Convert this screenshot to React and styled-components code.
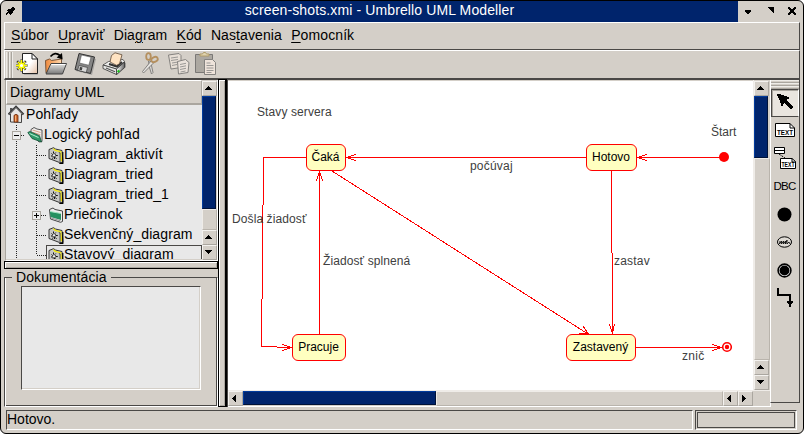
import React from "react";
import styled, { createGlobalStyle } from "styled-components";

const c = {
  face: "#d4cfc8",
  light: "#ffffff",
  mid: "#aaa69f",
  dark: "#4a4846",
  navy: "#00246c",
  view: "#e8e8e8",
  red: "#ff0000",
};

const Global = createGlobalStyle`
  * { box-sizing: border-box; }
  body { margin: 0; background: #fff; overflow: hidden; }
  svg { display: block; flex: none; }
`;

const Window = styled.div`
  width: 804px;
  height: 434px;
  border: 1px solid #000;
  border-radius: 6px;
  overflow: hidden;
  background: ${c.face};
  font: 14px/20px "Liberation Sans", Arial, sans-serif;
  color: #000;
  display: flex;
  flex-direction: column;
`;
const TitleBar = styled.header`
  height: 21px;
  flex: none;
  display: flex;
`;
const Caption = styled.div`
  width: 716px;
  background: ${c.navy};
  color: #fff;
  text-align: center;
  letter-spacing: 0.12px;
  line-height: 19px;
  padding-right: 1px;
`;
const Frame = styled.div`
  margin: 0 3px;
  width: 796px;
  display: flex;
  flex-direction: column;
`;
const MenuBar = styled.nav`
  height: 28px;
  border: 1px solid ${c.light};
  border-right-color: ${c.dark};
  border-bottom-color: ${c.dark};
  display: flex;
  gap: 9.2px;
  padding-left: 6px;
  line-height: 25px;
`;
const MenuItem = styled.span`
  letter-spacing: 0.1px;
  white-space: nowrap;
  u { text-underline-offset: 1.5px; text-decoration-thickness: 1px; }
`;
const ToolBar = styled.div`
  height: 30px;
  border: 1px solid ${c.light};
  border-right-color: ${c.dark};
  border-bottom: 2px solid ${c.dark};
  display: flex;
  padding: 1px 0 0 1px;
`;
const Grip = styled.div`
  width: 8px;
  height: 26px;
  margin-right: 2px;
  background: repeating-linear-gradient(90deg, #eeece8 0 1px, ${c.face} 1px 2px, ${c.mid} 2px 3px);
`;
const ToolButton = styled.div`
  width: ${(p) => p.$w}px;
  opacity: ${(p) => (p.$off ? 0.62 : 1)};
`;
const Body = styled.main`
  height: 327px;
  display: flex;
`;
const Side = styled.aside`
  width: 214px;
  display: flex;
  flex-direction: column;
`;
const TreePanel = styled.section`
  height: 181px;
  border-left: 1px solid ${c.mid};
  border-bottom: 1px solid ${c.light};
  border-right: 1px solid ${c.light};
  margin-left: 1px;
  display: flex;
`;
const TreeView = styled.div`
  width: 196px;
  height: 179px;
  background: ${c.view};
  overflow: hidden;
`;
const TreeHeader = styled.div`
  height: 25px;
  background: ${c.face};
  border: 1px solid ${c.light};
  border-right: 1px solid ${c.mid};
  border-bottom: 2px solid ${c.mid};
  padding-left: 3px;
  line-height: 22px;
  letter-spacing: 0.08px;
`;
const TreeRow = styled.div`
  height: 20px;
  display: flex;
  white-space: nowrap;
`;
const TreeItem = styled.div`
  display: flex;
  flex: ${(p) => (p.$focus ? "1" : "none")};
  margin-left: ${(p) => (p.$focus ? -2 : 0)}px;
  border: solid ${c.dark};
  border-width: ${(p) => (p.$focus ? "1px" : "0")};
  padding-left: ${(p) => (p.$focus ? 1 : 0)}px;
  line-height: ${(p) => (p.$focus ? 16 : 18)}px;
  letter-spacing: 0.1px;
`;
const ScrollColumn = styled.div`
  width: ${(p) => p.$w}px;
  display: flex;
  flex-direction: column;
  padding-top: 1px;
  border-left: ${(p) => (p.$edge ? "1px solid #efece8" : "0")};
  background: ${c.face};
`;
const ScrollRow = styled.div`
  height: 16px;
  display: flex;
  border-top: 1px solid #efece8;
`;
const ScrollButton = styled.div`
  width: 15px;
  height: 15px;
  flex: none;
  border: 1px solid #f4f2ef;
  border-right-color: ${c.mid};
  border-bottom-color: ${c.mid};
  background: ${c.face};
  display: grid;
  align-content: center;
  padding: 0 0 1px ${(p) => (p.$side ? 3 : 2)}px;
`;
const Thumb = styled.div`
  flex: none;
  width: ${(p) => p.$w}px;
  height: ${(p) => p.$h}px;
  background: ${c.navy};
  border: 1px solid #003a9c;
  border-right-color: #001238;
  border-bottom-color: #001238;
`;
const Groove = styled.div`
  flex: 1;
  border: 1px solid #efece8;
  border-right-color: #b9b4ac;
  border-bottom-color: #b9b4ac;
`;
const HSplitter = styled.div`
  height: 8px;
  border: 1px solid #000;
  box-shadow: inset 1px 1px #fff, inset -1px -1px ${c.mid};
`;
const VSplitter = styled.div`
  width: 9px;
  height: 328px;
  margin-top: -1px;
  border: 1px solid #000;
  border-right-width: 2px;
  box-shadow: inset 1px 1px #fff, inset -1px -1px ${c.mid};
`;
const Group = styled.fieldset`
  margin: 0;
  padding: 0 0 0 16px;
  height: 138px;
  min-width: 0;
  border: 1px solid ${c.dark};
  border-right-color: #fff;
  border-bottom-color: #fff;
  box-shadow: inset 1px 0 #fff, inset -1px -1px ${c.dark};
`;
const Legend = styled.legend`
  margin-left: -9px;
  padding: 0 4px;
  height: 17px;
  line-height: 17px;
  letter-spacing: 0.1px;
`;
const DocText = styled.div`
  width: 180px;
  height: 104px;
  background: ${c.view};
  border: 1px solid ${c.dark};
  border-right-color: #fff;
  border-bottom-color: #fff;
  box-shadow: inset -1px -1px ${c.face};
`;
const Work = styled.section`
  width: 543px;
  display: grid;
  grid-template: 310px 17px / 526px 17px;
  border-left: 1px solid ${c.dark};
`;
const Canvas = styled.div`
  width: 525px;
  border-top: 1px solid ${c.face};
  background: #fff;
  position: relative;
  overflow: hidden;
  font-size: 12px;
  line-height: 14px;
`;
const WorkV = styled.div`
  display: flex;
  margin-left: -1px;
  border-right: 1px solid #fff;
`;
const WorkH = styled.div`
  grid-column: 1 / 3;
  border-bottom: 1px solid #fff;
  border-right: 1px solid #fff;
`;
const StateNode = styled.div`
  position: absolute;
  left: ${(p) => p.$x - 228}px;
  top: ${(p) => p.$y - 81}px;
  width: ${(p) => p.$w}px;
  height: 27px;
  line-height: 25px;
  text-align: center;
  border: 1px solid ${c.red};
  border-radius: 6px;
  background: #ffffc0;
  padding-right: 1px;
`;
const EdgeLabel = styled.div`
  position: absolute;
  left: ${(p) => p.$x - 228}px;
  top: ${(p) => p.$base - 81 - 11}px;
  letter-spacing: ${(p) => p.$ls || 0}px;
  color: #404040;
  white-space: nowrap;
`;
const Palette = styled.aside`
  width: 30px;
  height: 323px;
  border-right: 1px solid ${c.dark};
  border-bottom: 1px solid ${c.dark};
  border-left: 1px solid #fff;
`;
const PaletteGrip = styled.div`
  height: 9px;
  background: repeating-linear-gradient(#eeece8 0 1px, ${c.face} 1px 2px, ${c.mid} 2px 3px);
`;
const PaletteButton = styled.div`
  height: 28px;
  display: grid;
  place-items: center;
  padding: 0 1px 2px 0;
  font-size: 11.5px;
  letter-spacing: -0.7px;
  border: 1px solid ${(p) => (p.$on ? c.dark : "transparent")};
  border-right-color: ${(p) => (p.$on ? "#fff" : "transparent")};
  box-shadow: ${(p) => (p.$on ? `inset 1px 1px ${c.mid}` : "none")};
  background: ${(p) => (p.$on ? "#e9e5df" : "transparent")};
`;
const StatusBar = styled.footer`
  height: 20px;
  margin: 3px 3px 0 2px;
  display: flex;
  gap: 2px;
`;
const StatusCell = styled.div`
  width: ${(p) => p.$w}px;
  border: 1px solid ${c.dark};
  border-right-color: #fff;
  border-bottom-color: #fff;
  line-height: 17px;
  padding: ${(p) => (p.$inset ? "1px" : "0")};
`;
const Progress = styled.div`
  height: 16px;
  border: 1px solid ${c.dark};
`;

const ARROWS = {
  up: "M3 0h1v1h1v1h1v1h1v1H0V3h1V2h1V1h1z",
  down: "M0 0h7v1H6v1H5v1H4v1H3V3H2V2H1V1H0z",
  left: "M3 0h1v7H3V6H2V5H1V4H0V3h1V2h1V1h1z",
  right: "M0 0h1v1h1v1h1v1h1v1H3v1H2v1H1v1H0z",
};
const Arrow = ({ dir }) => {
  const side = dir === "left" || dir === "right";
  return (
    <ScrollButton $side={side}>
      <svg width={side ? 4 : 7} height={side ? 7 : 4} shapeRendering="crispEdges">
        <path d={ARROWS[dir]} />
      </svg>
    </ScrollButton>
  );
};

const Pin = () => (
  <svg width="21" height="21" shapeRendering="crispEdges">
    <path d="M11 6h2v1h1v2h-1v1h-1v2h-1v1h-1v1H9v-1H8v-1H7v1H6v1H5v-2h1v-1h1v-1H6V9h1V8h3V7h1z" />
  </svg>
);
const WindowButtons = () => (
  <svg width="65" height="21" shapeRendering="crispEdges">
    <path d="M7 9h6v2h-1v1h-1v1H9v-1H8v-1H7z" />
    <path d="M30 6h6v6h-1v-1h-1v-1h-1V9h-1V8h-1V7h-1z" />
    <path d="M50 6h2v1h1v1h2V7h1V6h2v2h-1v1h-1v2h1v1h1v2h-2v-1h-1v-1h-2v1h-1v1h-2v-2h1v-1h1V9h-1V8h-1z" />
  </svg>
);

const Defs = () => (
  <svg width="0" height="0">
    <defs>
      <linearGradient id="paper" x2="1" y2="1"><stop stopColor="#fff" /><stop offset=".5" stopColor="#fff" /><stop offset="1" stopColor="#e3bfa4" /></linearGradient>
      <linearGradient id="steel" x2="0" y2="1"><stop stopColor="#e6e6e4" /><stop offset="1" stopColor="#777" /></linearGradient>
      <linearGradient id="orange" x2="1" y2="0"><stop stopColor="#f08a3c" /><stop offset="1" stopColor="#ffd9ae" /></linearGradient>
      <linearGradient id="tray" x2="1" y2="0"><stop stopColor="#fff" /><stop offset="1" stopColor="#666" /></linearGradient>
    </defs>
  </svg>
);
const NewIcon = () => (
  <svg width="24" height="24">
    <path d="M8 2.5h9l5 5V23H8z" fill="#999" opacity=".6" />
    <path d="M6.500 1.500h9.500l5.500 5.500v14.500h-15z" fill="url(#paper)" stroke="#222" />
    <path d="M16 1.500V7h5.500z" fill="#fff" stroke="#222" />
    <path d="M5.500 7.500v12M-.5 13.500h12M1.200 9.200l8.600 8.600M9.800 9.200L1.200 17.800" stroke="#333" strokeWidth="2.400" strokeDasharray="1.200 .6" />
    <path d="M5.500 8v11M0 13.500h11M2 10l7 7M9 10l-7 7" stroke="#ff0" strokeWidth="1.600" />
    <circle cx="5.500" cy="13.500" r="2.200" fill="#fff" stroke="#ff0" strokeWidth="1.200" />
  </svg>
);
const OpenIcon = () => (
  <svg width="25" height="24">
    <path d="M2 21L1.500 8.500l4-1.500 2 1.500 10-1.500v6z" fill="url(#orange)" stroke="#6e4b30" strokeWidth=".9" />
    <path d="M7 11.500h15.500l-4 10.500H2z" fill="url(#steel)" stroke="#444" />
    <path d="M7.500 12.500h14" stroke="#fff" />
    <path d="M6.500 4.500Q11-.8 16 3.500" fill="none" stroke="#000" strokeWidth="1.700" />
    <path d="M18 1l.6 6.500-6-2z" />
  </svg>
);
const SaveIcon = () => (
  <svg width="24" height="24">
    <path d="M6 3l16 4-4 16L2 19z" fill="#888" opacity=".6" />
    <path d="M5 1.500L20.500 5l-4 16.500L1 17.500z" fill="#858585" stroke="#333" />
    <path d="M7.500 3l9.500 2.200-2.200 8-9.300-2.200z" fill="#fff" stroke="#444" strokeWidth=".5" />
    <path d="M5 13.500l8.500 2-1.300 5-8.500-2.300z" fill="#d8d8d8" stroke="#333" strokeWidth=".6" />
    <path d="M6 14.800l2.500.6-.7 2.900-2.500-.6z" fill="#444" />
  </svg>
);
const PrintIcon = () => (
  <svg width="26" height="24">
    <path d="M3 16l12 7 9-8v-4l-2-1z" fill="#777" opacity=".6" />
    <path d="M1 13L6.500 9.500 21 7.500l1.500 2L14.500 17z" fill="#eeeeec" stroke="#444" strokeWidth=".8" />
    <path d="M7 12l8 2.500 5-4.500" fill="none" stroke="#333" strokeWidth="2.200" />
    <path d="M8 10L9.500 3.500 13 .8l7 2-2.500 9-3 1.500z" fill="#ffe3c2" stroke="#5e4a38" strokeWidth=".8" />
    <path d="M1 13l13.500 4v5.500L1 16.500z" fill="#e6e6e4" stroke="#333" strokeWidth=".8" />
    <path d="M14.500 17l8-7v5.500l-8 7z" fill="url(#tray)" stroke="#333" strokeWidth=".8" />
    <path d="M4 16l9 3.800" stroke="#555" strokeWidth="1.200" />
    <path d="M15.500 19.800l2-1.300" stroke="#14c714" strokeWidth="2" />
  </svg>
);
const CutIcon = () => (
  <svg width="19" height="24">
    <path d="M7.500 9L9.500 9l2.500 11.500-1.500 1.500-2.200-7z" fill="#ddd" stroke="#444" strokeWidth=".9" />
    <path d="M1.500 19.500L10 9l3 1.500L2.500 21z" fill="#eee" stroke="#444" strokeWidth=".9" />
    <ellipse cx="13.500" cy="7.500" rx="3.400" ry="2.400" fill="none" stroke="#a36b20" strokeWidth="1.800" transform="rotate(-25 13.500 7.500)" />
    <ellipse cx="7.500" cy="4.500" rx="2.300" ry="3.400" fill="none" stroke="#a36b20" strokeWidth="1.800" />
  </svg>
);
const CopyIcon = () => (
  <svg width="24" height="24">
    <path d="M1.500 3L12 1.500l2 2v12L4 17z" fill="#f4e9e0" stroke="#555" />
    <path d="M4 6l7-1M4 8.500l7-1M5 11l6-1M5 13.500l5-1" stroke="#777" />
    <path d="M10.500 9.500l8-2L22 10.500l-1 10-9.500 1.500z" fill="#f8efe8" stroke="#555" />
    <path d="M13 12.500l6-1.200M13 15l6-1.200M13 17.500l6-1.200M13.500 20l5-1" stroke="#777" />
  </svg>
);
const PasteIcon = () => (
  <svg width="23" height="24">
    <path d="M1.500 2.500h17v18h-17z" fill="#95918a" stroke="#444" />
    <path d="M6 4V2h2.500L9.500.5h2L12.500 2H15v2z" fill="#e8d7a0" stroke="#9a7d30" />
    <path d="M10.500 7.500h8l3 3v12h-11z" fill="#fff0e6" stroke="#555" />
    <path d="M12.500 11h4M12.500 13.500h7M12.500 16h7M12.500 18.500h7M12.500 20.500h5" stroke="#777" />
  </svg>
);

const HomeIcon = () => (
  <svg width="18" height="20">
    <path d="M2.500 8.500v8.500l11 .5V8.500L8 2z" fill="#e8e6e4" stroke="#444" />
    <path d="M2 3h2.500v4H2z" fill="#555" />
    <path d="M.5 9.500L8 1.800 15.500 9.500" fill="none" stroke="#3a3a3a" strokeWidth="2.200" />
    <path d="M1.500 9.200L8 2.700 14.500 9.200" fill="none" stroke="#bbb" strokeWidth=".7" />
    <path d="M6 17V10.500q2-2.500 4 0V17z" fill="#c85d20" stroke="#6b2c0c" strokeWidth=".8" />
    <path d="M7.700 16.500v-6" stroke="#ffc38c" />
  </svg>
);
const FolderIcon = ({ open }) => (
  <svg width={open ? 17 : 16} height="20">
    {open ? (
      <>
        <path d="M4 8V4.500l3-2 3 1.500 5 1v11.500L12 17z" fill="#eee" stroke="#555" />
        <path d="M5.500 5l8 2.500M5.500 7.200l8 2.600" stroke="#d77d55" strokeWidth=".7" />
        <path d="M.8 7.500l2-1 9.700 4.200 2 6.300L5 13.500z" fill="#319968" stroke="#125036" strokeWidth=".8" />
        <path d="M2.500 8.500l9 4" stroke="#b3f0d2" />
      </>
    ) : (
      <>
        <path d="M2.500 14L1.500 4.500l3.500-1.500 2 1.500 7.500 1.500v10.500l-2 .8z" fill="#eee" stroke="#444" />
        <path d="M1.800 6.500l11.200 2v6.500l-10.500-3z" fill="#259060" />
        <path d="M2 6.500l11 2" stroke="#9ee0be" />
        <path d="M2.500 12.800l10 3" stroke="#999" />
      </>
    )}
  </svg>
);
const DiagramIcon = () => (
  <svg width="16" height="20">
    <path d="M1 4.500L5.500 2.700 7.500 4 14 5.500 15 17.500 11.500 17.500 1 13.500z" fill="#c8c8c6" stroke="#222" strokeWidth=".9" />
    <path d="M4.500 3.500l2 .2 1.500 1.300 5.500 1.200v1.300L7 6z" fill="#f6ea00" />
    <path d="M12.300 7.500l1.200.3.700 8.700-1.500-.2z" fill="#e8d900" />
    <path d="M10.800 7.500l1.200.4v9" fill="none" stroke="#333" strokeWidth=".8" />
    <path d="M14.800 7v11.500h-3.500" fill="none" stroke="#000" strokeWidth="1.200" />
    <path d="M5.500 6.500v1.500M3.500 8.500l1 1M7.800 7.500l-.8 1M3 11h1.500M5 12.500l-.5 1.200M8 10.500h1.800M7.500 12.500l1 1.300M6.500 11.500v2.500" stroke="#111" />
    <circle cx="6" cy="10.300" r="1.700" fill="#eee" stroke="#222" strokeWidth=".8" />
  </svg>
);

const dots = { stroke: "#222", strokeDasharray: "1 1", fill: "none" };
const Guides = ({ level, last, expander }) => {
  if (!level) return <svg width="2" height="20" />;
  const w = level === 1 ? 21 : 42;
  const x = level === 1 ? 10.5 : 30.5;
  return (
    <svg width={w} height="20" shapeRendering="crispEdges">
      {level === 2 && <path d="M10.500 0v20" {...dots} />}
      <path d={`M${x} 0v${last ? 10 : 20}M${x} 10.500h${w - x - 2}`} {...dots} />
      {expander && (
        <>
          <rect x={x - 4} y="6.500" width="8" height="8" fill="#eee" stroke="#aaa69f" />
          <path d={`M${x - 2.5} 10.500h5${expander === "+" ? `M${x} 8v5` : ""}`} stroke="#000" />
        </>
      )}
    </svg>
  );
};

const TREE = [
  { text: "Pohľady", level: 0, icon: <HomeIcon /> },
  { text: "Logický pohľad", level: 1, icon: <FolderIcon open />, expander: "-" },
  { text: "Diagram_aktivít", level: 2, icon: <DiagramIcon /> },
  { text: "Diagram_tried", level: 2, icon: <DiagramIcon /> },
  { text: "Diagram_tried_1", level: 2, icon: <DiagramIcon /> },
  { text: "Priečinok", level: 2, icon: <FolderIcon />, expander: "+" },
  { text: "Sekvenčný_diagram", level: 2, icon: <DiagramIcon /> },
  { text: "Stavový_diagram", level: 2, icon: <DiagramIcon />, focus: true, last: true },
];

const MENU = [
  ["", "S", "úbor"],
  ["", "U", "praviť"],
  ["Dia", "g", "ram"],
  ["", "K", "ód"],
  ["Nas", "t", "avenia"],
  ["", "P", "omocník"],
];

const TOOLS = [
  [NewIcon, 28],
  [OpenIcon, 30],
  [SaveIcon, 28],
  [PrintIcon, 39],
  [CutIcon, 26, true],
  [CopyIcon, 27, true],
  [PasteIcon, 24, true],
];

const Edges = () => (
  <svg width="525" height="309" viewBox="228 81 525 309" fill="none" stroke={c.red} shapeRendering="crispEdges">
    <path d="M306 157.500H263.500V205M262.500 205V299M261.500 299V346.500H277M277 347.500H292M282 344.500L292 347.500L282 350.500" />
    <path d="M319.500 334V171M316.500 181L319.500 171L322.500 181" />
    <path d="M332 171L588 334M579 333L588.500 334L583 326" />
    <path d="M586 157.500H346M356 154.500L346 157.500L356 160.500" />
    <path d="M611.500 171V253M612.500 253V334M609.500 324L612.500 334L614.500 324" />
    <path d="M720 157.500H637M647 154.500L637 157.500L647 160.500" />
    <path d="M636 347.500H722M712 344.500L722 347.500L712 350.500" />
    <g shapeRendering="auto">
      <circle cx="724" cy="157" r="5" fill={c.red} stroke="none" />
      <circle cx="727" cy="347" r="4.300" fill="#fff" strokeWidth="1.600" />
      <circle cx="727" cy="347" r="2.200" fill={c.red} stroke="none" />
    </g>
  </svg>
);

const PointerIcon = () => (
  <svg width="18" height="18" shapeRendering="crispEdges">
    <path d="M1 1h4v1h3v1h3v1h2v2h-2v2h1v1h1v1h1v1h1v1h1v1h1v2h-1v1h-2v-1h-1v-1h-1v-1h-1v-1h-1v-1H9v-1H8v1H7v2H5V10H4V7H3V5H2V3H1z" />
  </svg>
);
const NoteShape = ({ small }) => (
  <svg width={small ? 16 : 20} height={small ? 11 : 14}>
    <path d={small ? "M.5.500h11.500l3.500 3v7H.500z" : "M.5.500h14.500l4.500 4.500v8.500H.500z"} fill="#fff" stroke="#000" />
    <path d={small ? "M12 .5v3.500h3.500" : "M15 .5v4.500h4.500"} fill="none" stroke="#000" />
    <text
      x={small ? 1.5 : 2}
      y={small ? 9.2 : 12}
      textLength={small ? 13 : 16}
      lengthAdjust="spacingAndGlyphs"
      fontSize={small ? 7 : 8}
      fontWeight="bold"
      letterSpacing="0"
    >
      TEXT
    </text>
  </svg>
);
const AnchorIcon = () => (
  <svg width="22" height="22">
    <path d="M.5.500h10v6H.500zM.5 3.500h10" fill="#fff" stroke="#000" />
    <path d="M5 7l6 4" stroke="#000" strokeDasharray="2 1" />
    <svg x="6" y="11" width="16" height="11"><NoteShape small /></svg>
  </svg>
);
const InitialIcon = () => <svg width="15" height="15"><circle cx="7.500" cy="7.500" r="7" /></svg>;
const ActivityIcon = () => (
  <svg width="15" height="12" fill="none" stroke="#000">
    <ellipse cx="7.500" cy="6" rx="7" ry="5.200" fill="#dedad4" />
    <path d="M3 5l-.5 3 2-3v3l2-3v3l2-3v3l1.500-4v4l2-2 1 2" strokeWidth=".8" />
  </svg>
);
const FinalIcon = () => (
  <svg width="15" height="15">
    <circle cx="7.500" cy="7.500" r="6.400" fill="#fff" stroke="#000" strokeWidth="1.600" />
    <circle cx="7.500" cy="7.500" r="5" />
  </svg>
);
const TransitionIcon = () => (
  <svg width="17" height="20" shapeRendering="crispEdges">
    <path d="M1 0h2v6h11v2H1zM13 6h2v7h-2z" />
    <path d="M11 13h6v2h-1v1h-1v3h-2v-3h-1v-1h-1z" />
  </svg>
);

export default function App() {
  return (
    <Window>
      <Global />
      <TitleBar>
        <Pin />
        <Caption>screen-shots.xmi - Umbrello UML Modeller</Caption>
        <WindowButtons />
      </TitleBar>
      <Frame>
        <MenuBar>
          {MENU.map(([a, k, b]) => (
            <MenuItem key={k}>{a}<u>{k}</u>{b}</MenuItem>
          ))}
        </MenuBar>
        <ToolBar>
          <Grip />
          {TOOLS.map(([Icon, w, off], i) => (
            <ToolButton key={i} $w={w} $off={off}><Icon /></ToolButton>
          ))}
          <Defs />
        </ToolBar>
        <Body>
          <Side>
            <TreePanel>
              <TreeView>
                <TreeHeader>Diagramy UML</TreeHeader>
                {TREE.map((r) => (
                  <TreeRow key={r.text}>
                    <Guides level={r.level} last={r.last} expander={r.expander} />
                    <TreeItem $focus={r.focus}>{r.icon}{r.text}</TreeItem>
                  </TreeRow>
                ))}
              </TreeView>
              <ScrollColumn $w={15}>
                <Arrow dir="up" />
                <Thumb $w={14} $h={113} />
                <Groove />
                <Arrow dir="up" />
                <Arrow dir="down" />
              </ScrollColumn>
            </TreePanel>
            <HSplitter />
            <Group>
              <Legend>Dokumentácia</Legend>
              <DocText />
            </Group>
          </Side>
          <VSplitter />
          <Work>
            <Canvas>
              <Edges />
              <StateNode $x={306} $y={144} $w={40}>Čaká</StateNode>
              <StateNode $x={586} $y={144} $w={51}>Hotovo</StateNode>
              <StateNode $x={292} $y={334} $w={54}>Pracuje</StateNode>
              <StateNode $x={566} $y={334} $w={70}>Zastavený</StateNode>
              <EdgeLabel $x={257} $base={116} $ls={0.1}>Stavy servera</EdgeLabel>
              <EdgeLabel $x={711} $base={136}>Štart</EdgeLabel>
              <EdgeLabel $x={470} $base={170} $ls={0.2}>počúvaj</EdgeLabel>
              <EdgeLabel $x={232} $base={223} $ls={0.1}>Došla žiadosť</EdgeLabel>
              <EdgeLabel $x={323} $base={265} $ls={0.1}>Žiadosť splnená</EdgeLabel>
              <EdgeLabel $x={614} $base={265} $ls={0.2}>zastav</EdgeLabel>
              <EdgeLabel $x={682} $base={360} $ls={0.3}>znič</EdgeLabel>
            </Canvas>
            <WorkV>
              <ScrollColumn $w={17} $edge>
                <Arrow dir="up" />
                <Thumb $w={14} $h={62} />
                <Groove />
                <Arrow dir="up" />
                <Arrow dir="down" />
              </ScrollColumn>
            </WorkV>
            <WorkH>
              <ScrollRow>
                <Arrow dir="left" />
                <Thumb $w={193} $h={14} />
                <Groove />
                <Arrow dir="left" />
                <Arrow dir="right" />
                <svg width="17" height="15" />
              </ScrollRow>
            </WorkH>
          </Work>
          <Palette>
            <PaletteGrip />
            <PaletteButton $on><PointerIcon /></PaletteButton>
            <PaletteButton><NoteShape /></PaletteButton>
            <PaletteButton><AnchorIcon /></PaletteButton>
            <PaletteButton>DBC</PaletteButton>
            <PaletteButton><InitialIcon /></PaletteButton>
            <PaletteButton><ActivityIcon /></PaletteButton>
            <PaletteButton><FinalIcon /></PaletteButton>
            <PaletteButton><TransitionIcon /></PaletteButton>
          </Palette>
        </Body>
        <StatusBar>
          <StatusCell $w={688}>Hotovo.</StatusCell>
          <StatusCell $w={102} $inset><Progress /></StatusCell>
        </StatusBar>
      </Frame>
    </Window>
  );
}
